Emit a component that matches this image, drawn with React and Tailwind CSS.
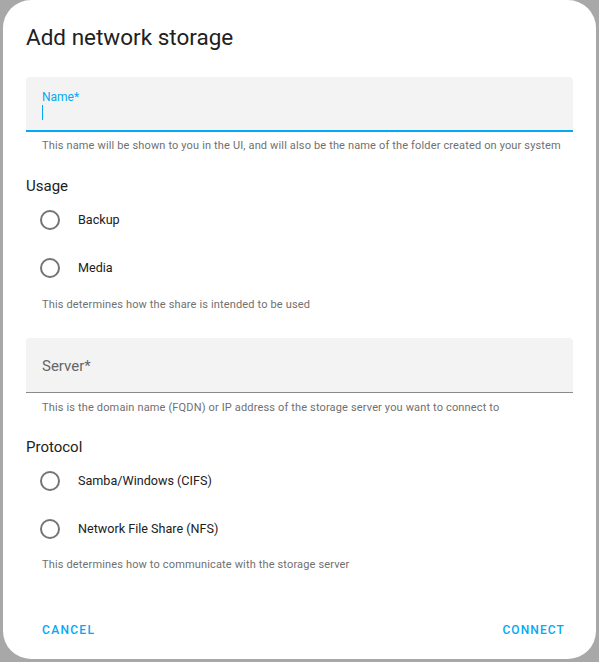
import React from "react";

const font = { fontFamily: "Roboto, 'Liberation Sans', sans-serif" };

const Radio = ({ label }) => (
  <div className="flex h-12 items-center">
    <span className="ml-[14px] h-5 w-5 rounded-full border-2 border-[#757575]" />
    <span className="ml-[18px] text-[12.6px] leading-5 text-[#212121]">{label}</span>
  </div>
);

const Helper = ({ children, className = "" }) => (
  <p className={`h-4 whitespace-nowrap pl-4 text-[11px] leading-4 tracking-[0.15px] text-[#707070] ${className}`}>{children}</p>
);

export default function App() {
  return (
    <div className="h-[662px] w-[599px] bg-[#a8a8a8] pl-[3px]" style={font}>
      <div className="flex h-[659px] w-[593px] flex-col rounded-[28px] bg-white px-[23px]">
        {/* titolo */}
        <h2 className="mt-[23px] h-7 text-[22.5px] leading-7 text-[#212121]">Add network storage</h2>

        {/* campo nome, attivo */}
        <div className="mt-[26px] h-[55px] rounded-t-[4px] border-b-2 border-[#03a9f4] bg-[#f3f3f3] px-4 pt-[12px]">
          <div className="text-[12px] leading-4 text-[#03a9f4]">Name*</div>
          <div className="h-[15px] w-px bg-[#03a9f4]" />
        </div>
        <Helper className="mt-[6px]">
          This name will be shown to you in the UI, and will also be the name of the folder created on your system
        </Helper>

        <div className="mt-[22px] h-5 text-[15px] leading-5 text-[#212121]">Usage</div>
        <Radio label="Backup" />
        <Radio label="Media" />
        <Helper className="mt-[5px]">This determines how the share is intended to be used</Helper>

        {/* campo server */}
        <div className="mt-[25px] flex h-[55px] items-center rounded-t-[4px] border-b border-[#8a8a8a] bg-[#f3f3f3] px-4 pt-[3px]">
          <span className="text-[15px] text-[#666666]">Server*</span>
        </div>
        <Helper className="mt-[7px]">
          This is the domain name (FQDN) or IP address of the storage server you want to connect to
        </Helper>

        <div className="mt-[21px] h-5 text-[15px] leading-5 text-[#212121]">Protocol</div>
        <Radio label="Samba/Windows (CIFS)" />
        <Radio label="Network File Share (NFS)" />
        <Helper className="mt-[4px]">This determines how to communicate with the storage server</Helper>

        <div className="mt-[39px] flex h-9 items-center justify-between">
          <button className="ml-2 h-9 px-2 text-[12px] font-medium tracking-[1.3px] text-[#03a9f4]">CANCEL</button>
          <button className="h-9 px-2 text-[12px] font-medium tracking-[1.1px] text-[#03a9f4]">CONNECT</button>
        </div>
      </div>
    </div>
  );
}
